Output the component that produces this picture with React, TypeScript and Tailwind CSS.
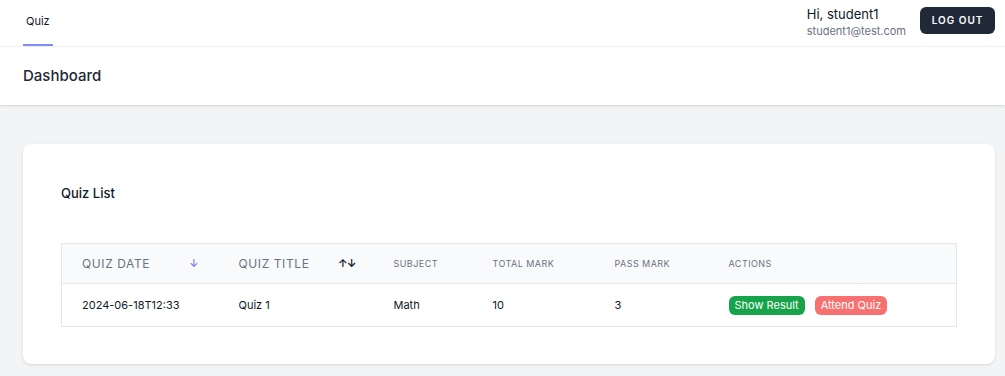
export default function App() {
  const font = { fontFamily: "Inter, 'Noto Sans', sans-serif" }
  return (
    <div className="min-h-[376px] bg-[#f3f4f6] font-['Inter',sans-serif]" style={font}>
      <nav className="h-[47px] bg-white border-b border-gray-100 flex items-stretch justify-between pl-[23px] pr-[10px]">
        <div className="flex items-stretch">
          <a className="inline-flex items-center px-[3px] border-b-2 border-[#818cf8] text-[11px] text-gray-900 pb-[1px]">
            Quiz
          </a>
        </div>
        <div className="flex items-center gap-[14px]">
          <div className="flex flex-col -mt-[2px]">
            <span className="text-[13px] leading-[17px] text-gray-900">Hi, student1</span>
            <span className="text-[11px] leading-[16px] text-gray-500">student1@test.com</span>
          </div>
          <button className="w-[75px] h-[27px] -mt-[6px] rounded-md bg-[#1f2937] text-white text-[10px] font-semibold tracking-widest">
            LOG OUT
          </button>
        </div>
      </nav>

      <header className="bg-white shadow h-[58px] flex items-center pl-[23px]">
        <h2 className="text-[15px] font-medium text-gray-800">Dashboard</h2>
      </header>

      <main className="pt-[39px] pl-[23px] pr-[10px]">
        <div className="bg-white rounded-lg shadow-sm px-[38px] pt-[40px] pb-[37px]">
          <h3 className="text-[13px] font-medium text-gray-900 leading-[18px]">Quiz List</h3>
          <table className="mt-[41px] w-full table-fixed border border-gray-200 border-collapse">
            <thead className="bg-gray-50">
              <tr className="h-[40px] text-gray-500 text-left">
                <th className="w-[157px] pl-[20px] pr-[20px] font-normal">
                  <div className="flex items-center justify-between">
                    <span className="text-[12px] tracking-wider">QUIZ DATE</span>
                    <span className="text-[11px] text-[#6366f1]">↓</span>
                  </div>
                </th>
                <th className="w-[155px] pl-[20px] pr-[18px] font-normal">
                  <div className="flex items-center justify-between">
                    <span className="text-[12px] tracking-wider">QUIZ TITLE</span>
                    <span className="text-[11px] text-gray-900 font-semibold tracking-[-1px]">↑↓</span>
                  </div>
                </th>
                <th className="w-[99px] pl-[20px] text-[9px] font-normal tracking-wider">SUBJECT</th>
                <th className="w-[122px] pl-[20px] text-[9px] font-normal tracking-wider">TOTAL MARK</th>
                <th className="w-[114px] pl-[20px] text-[9px] font-normal tracking-wider">PASS MARK</th>
                <th className="pl-[20px] text-[9px] font-normal tracking-wider">ACTIONS</th>
              </tr>
            </thead>
            <tbody>
              <tr className="h-[43px] border-t border-gray-200 text-[11px] text-gray-900">
                <td className="pl-[20px]">2024-06-18T12:33</td>
                <td className="pl-[20px]">Quiz 1</td>
                <td className="pl-[20px]">Math</td>
                <td className="pl-[20px]">10</td>
                <td className="pl-[20px]">3</td>
                <td className="pl-[20px]">
                  <div className="flex items-center gap-[10px]">
                    <button className="h-[19px] px-[6px] rounded-md bg-[#16a34a] text-white text-[11px]">
                      Show Result
                    </button>
                    <button className="h-[19px] px-[6px] rounded-md bg-[#f87171] text-white text-[11px]">
                      Attend Quiz
                    </button>
                  </div>
                </td>
              </tr>
            </tbody>
          </table>
        </div>
      </main>
    </div>
  )
}
